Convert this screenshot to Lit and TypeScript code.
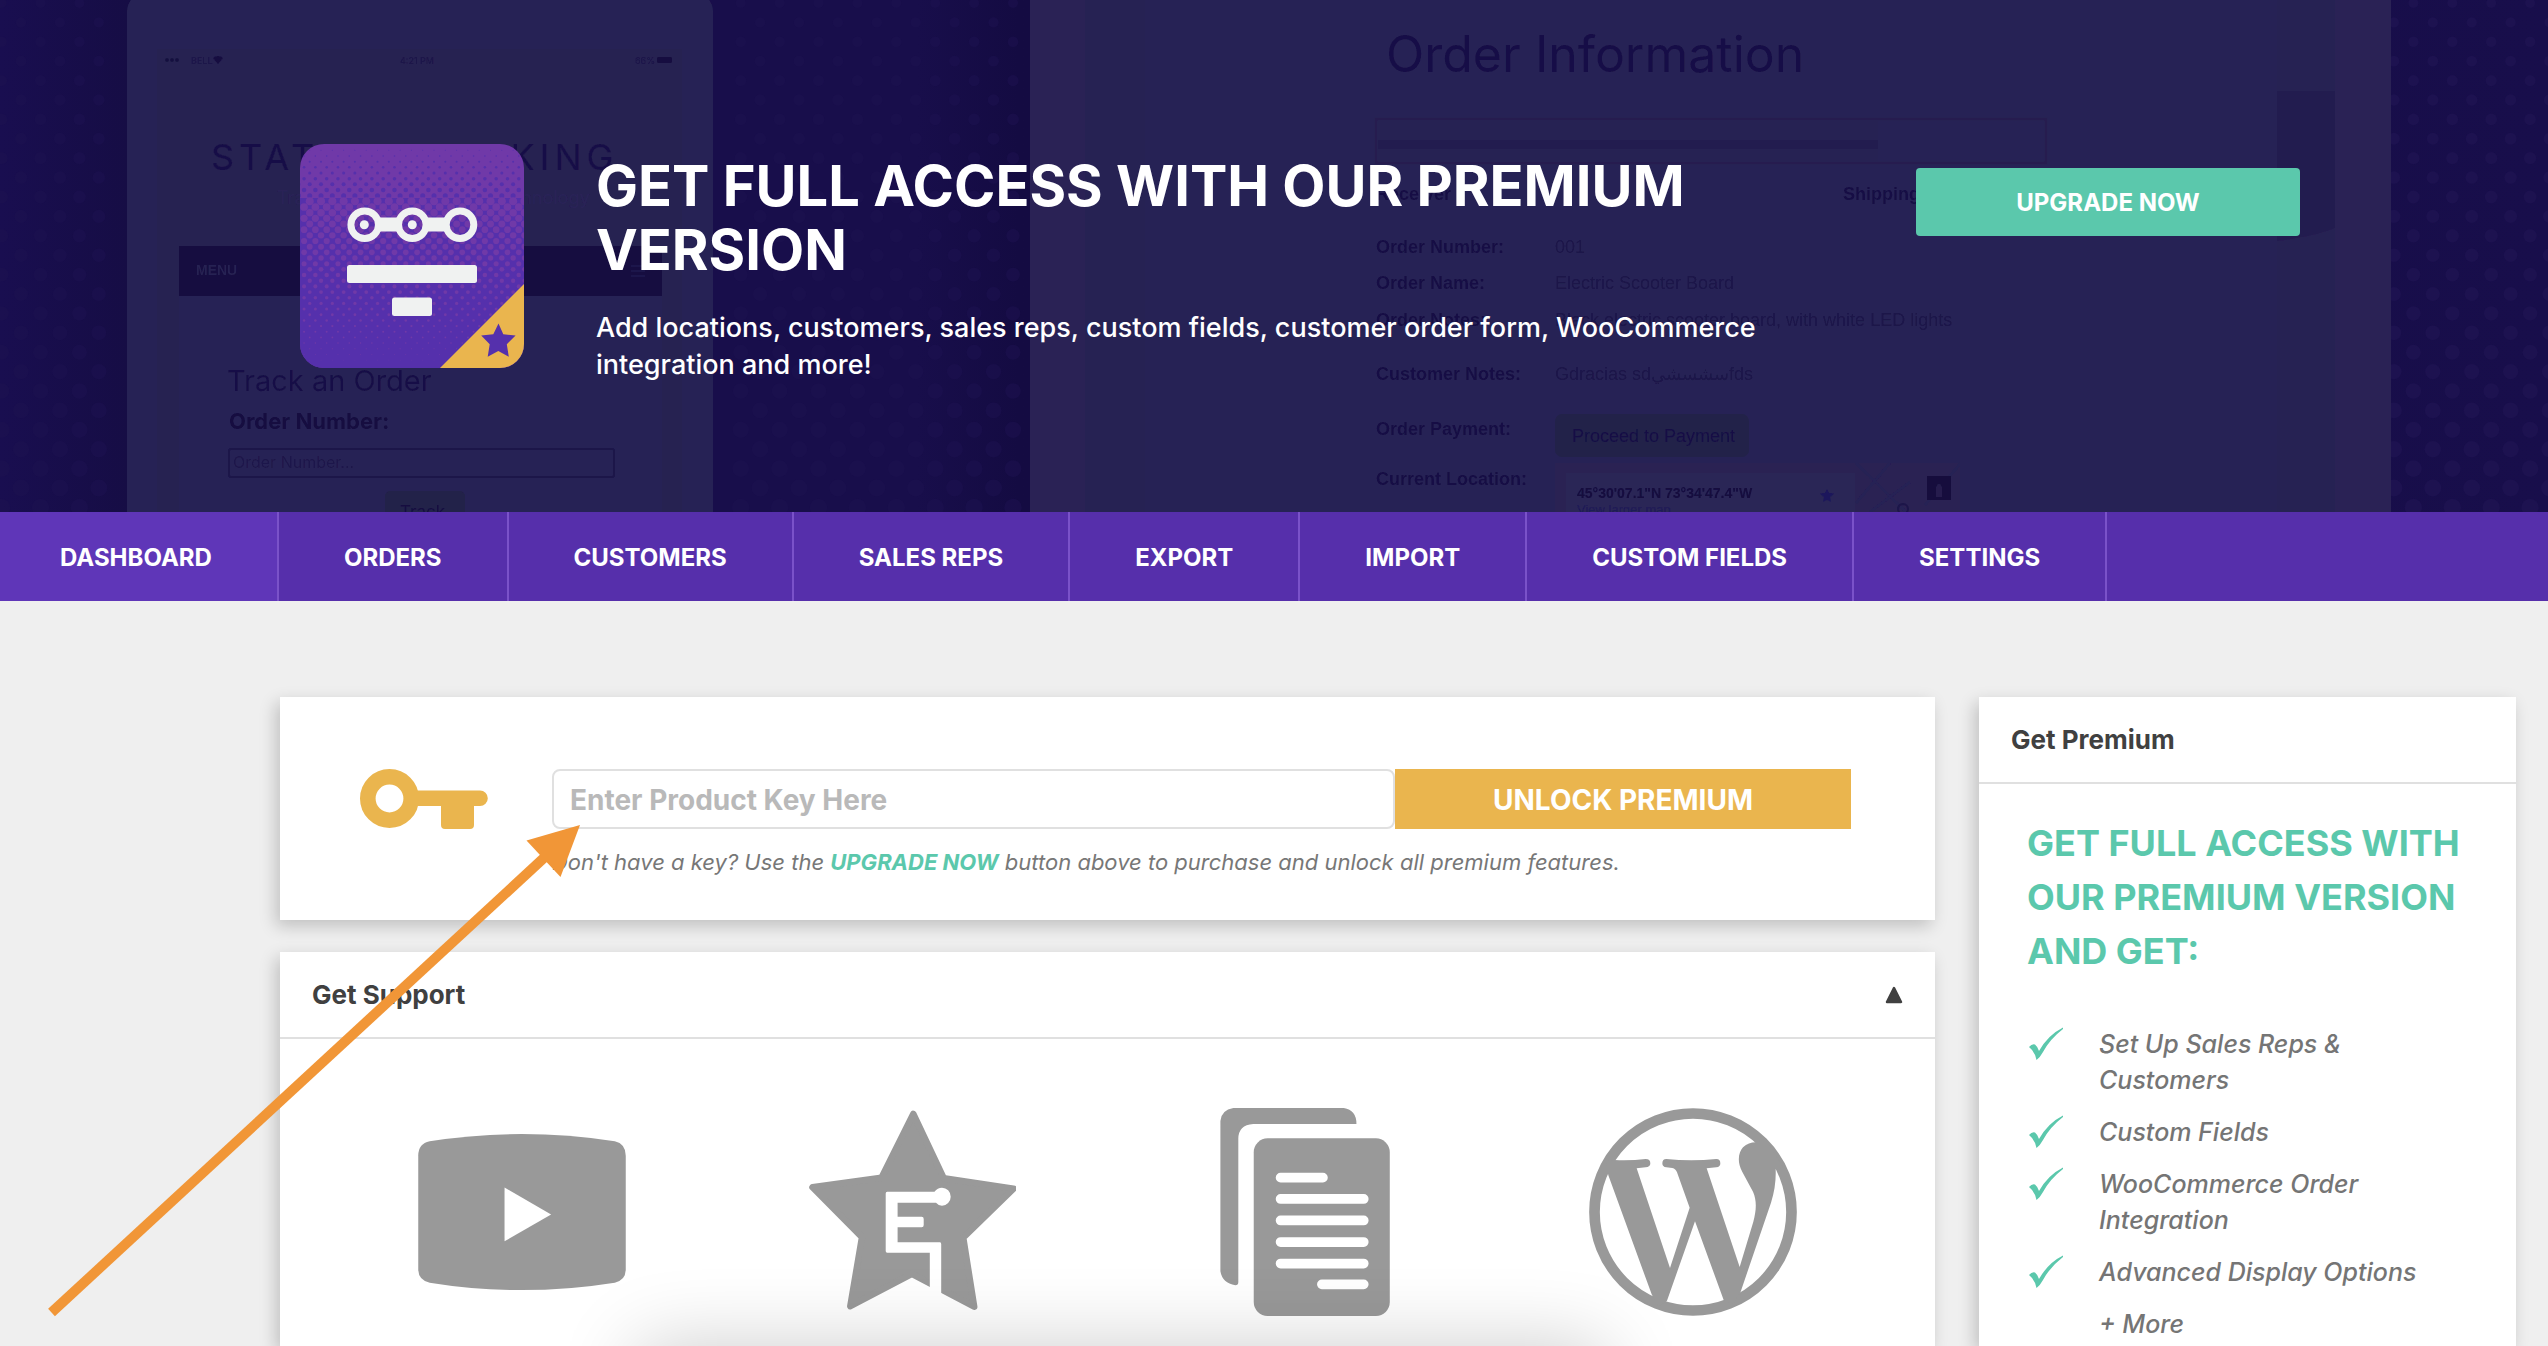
import { LitElement, html, svg, css } from "lit";
import { customElement, state } from "lit/decorators.js";

const NAV = [
  "Dashboard",
  "Orders",
  "Customers",
  "Sales Reps",
  "Export",
  "Import",
  "Custom Fields",
  "Settings",
];

const FEATURES = [
  "Set Up Sales Reps & Customers",
  "Custom Fields",
  "WooCommerce Order Integration",
  "Advanced Display Options",
];

const DETAILS = [
  { y: 253, label: "Order Number:", value: "001" },
  { y: 289, label: "Order Name:", value: "Electric Scooter Board" },
  { y: 326, label: "Order Notes:", value: "Black electric scooter board, with white LED lights" },
  { y: 380, label: "Customer Notes:", value: "Gdracias sdسشسشيfds" },
  { y: 435, label: "Order Payment:", value: "" },
  { y: 485, label: "Current Location:", value: "" },
];

/** Staggered dots of the hero background, growing towards the bottom. */
function heroDots() {
  const dots = [];
  for (let row = 0; row < 28; row++) {
    const y = 3 + row * 19.4;
    const r = 5 + row * 0.14;
    for (let col = 0; col < 67; col++) {
      const x = 1.6 + col * 38.9 + (row % 2 ? 19.4 : 0);
      if ((x > 118 && x < 722) || (x > 1022 && x < 2386)) continue;
      const strength = x < 1100 ? 0.55 : 1;
      dots.push(svg`<circle cx=${x} cy=${y} r=${r} opacity=${strength} />`);
    }
  }
  return dots;
}

/** Halftone of the product logo: dark dots above, light dots below. */
function halftone() {
  const dark = [];
  const light = [];
  for (let row = 0; row < 38; row++) {
    const y = 6.3 + row * 5.67;
    for (let col = 0; col < 20; col++) {
      const x = -1.6 + col * 11.3 + (row % 2 ? 5.67 : 0);
      if (row < 9) {
        dark.push(svg`<circle cx=${x} cy=${y} r=${0.5 + row * 0.25} />`);
      } else {
        light.push(svg`<circle cx=${x + 5.67} cy=${y} r=${Math.max(0.4, 4 - (row - 9) * 0.13)} />`);
      }
    }
  }
  return svg`
    <g fill="#5530ac">${dark}</g>
    <rect y="54" width="224" height="170" fill="#5530ac" />
    <g fill="#7039a8">${light}</g>`;
}

@customElement("hero-backdrop")
export class HeroBackdrop extends LitElement {
  static styles = css`
    :host {
      display: block;
    }
    .art {
      display: block;
      width: 100%;
      height: 100%;
    }
    .sans {
      font-family: "Liberation Sans", Arial, sans-serif;
    }
    .geo {
      font-family: Inter, sans-serif;
      font-weight: 400;
    }
    .bold {
      font-weight: 700;
    }
    .spaced {
      letter-spacing: 5px;
    }
  `;

  render() {
    return html`
      <svg class="art" viewBox="0 0 2548 512" preserveAspectRatio="xMinYMin slice" aria-hidden="true">
        <defs>
          <linearGradient id="base" x1="0" y1="0" x2="1" y2="0">
            <stop offset="0" stop-color="#190e50" />
            <stop offset="0.05" stop-color="#160d45" />
            <stop offset="0.28" stop-color="#180e4b" />
            <stop offset="0.36" stop-color="#180e4b" />
            <stop offset="0.4" stop-color="#140b42" />
            <stop offset="1" stop-color="#180e4b" />
          </linearGradient>
          <filter id="soft" x="-5%" y="-5%" width="110%" height="110%">
            <feGaussianBlur stdDeviation="0.7" />
          </filter>
        </defs>
        <rect width="2548" height="512" fill="url(#base)" />
        <g fill="#1d1250">${heroDots()}</g>
        <g filter="url(#soft)">
          <rect x="127" y="-8" width="586" height="600" rx="20" fill="#282455" />
          <rect x="157" y="49" width="525" height="480" fill="#262051" />
          <g fill="#171041">
            <circle cx="167" cy="60" r="2" />
            <circle cx="172" cy="60" r="2" />
            <circle cx="177" cy="60" r="2" />
            <path d="M213 58 Q218 54 223 58 L218 64 Z" />
            <rect x="657" y="57" width="15" height="6" rx="1" />
          </g>
          <g class="geo" font-size="9" fill="#1c1648">
            <text x="191" y="64">BELL</text>
            <text x="400" y="64">4:21 PM</text>
            <text x="635" y="64">66%</text>
          </g>
          <text class="geo spaced" x="211" y="170" font-size="36" fill="#191147">STATUS TRACKING</text>
          <text class="geo" x="277" y="204" font-size="18" fill="#2a2457">Tracking with the newest technology</text>
          <rect x="179" y="246" width="483" height="50" fill="#130c3f" />
          <rect x="179" y="296" width="483" height="220" fill="#282455" />
          <text class="sans bold" x="196" y="275" font-size="14" fill="#282252">MENU</text>
          <path d="M631 266h14M631 271h14M631 276h14" stroke="#1f194b" stroke-width="2" />
          <text class="geo" x="227" y="391" font-size="29" fill="#191147">Track an Order</text>
          <text class="geo bold" x="229" y="429" font-size="22" fill="#150d41">Order Number:</text>
          <rect x="229" y="449" width="385" height="28" rx="2" fill="none" stroke="#1b1449" stroke-width="2" />
          <text class="geo" x="233" y="468" font-size="16" fill="#1f184b">Order Number...</text>
          <rect x="385" y="491" width="80" height="40" rx="5" fill="#22204a" />
          <text class="geo" x="400" y="518" font-size="17" fill="#171041">Track</text>

          <rect x="1030" y="-10" width="1361" height="600" fill="#292354" />
          <rect x="1085" y="-10" width="60" height="600" fill="#282053" />
          <rect x="1145" y="-10" width="1132" height="600" fill="#282455" />
          <rect x="2277" y="-10" width="58" height="600" fill="#282153" />
          <path d="M2277 91h58v137q-20 8-58 13z" fill="#241d50" />
          <text class="geo" x="1386" y="72" font-size="50" fill="#180f47">Order Information</text>
          <rect x="1376" y="119" width="670" height="44" fill="none" stroke="#251d50" stroke-width="3" />
          <rect x="1378" y="121" width="500" height="40" fill="#272152" />
          <rect x="1378" y="140" width="500" height="9" fill="#241e50" />
          <g class="sans" font-size="18" fill="#170f44">
            <text class="bold" x="1376" y="200">Receiver</text>
            <text class="bold" x="1843" y="200">Shipping</text>
            ${DETAILS.map(
              (d) => svg`
                <text class="bold" x="1376" y=${d.y}>${d.label}</text>
                <text x="1555" y=${d.y} fill="#1b1449">${d.value}</text>`,
            )}
          </g>
          <rect x="1555" y="414" width="194" height="43" rx="7" fill="#22204a" />
          <text class="sans" x="1572" y="442" font-size="18" fill="#170f45">Proceed to Payment</text>
          <rect x="1555" y="463" width="405" height="60" fill="#2a2153" />
          <path d="M1856 463l50 49M1890 463l-34 40M1925 505l36-42M1870 512l40-30" stroke="#272054" stroke-width="3" />
          <rect x="1566" y="473" width="289" height="50" fill="#292556" />
          <text class="sans bold" x="1577" y="498" font-size="14" fill="#130b3e">45°30'07.1"N 73°34'47.4"W</text>
          <text class="sans" x="1577" y="514" font-size="13" fill="#1f1a58">View larger map</text>
          <path d="M1827 489l2 4 5 .5-4 3.500 1 5-4-2.500-4 2.500 1-5-4-3.500 5-.5z" fill="#1c165c" />
          <rect x="1927" y="476" width="24" height="24" fill="#130b3c" />
          <path d="M1936 497v-10q3-7 6 0v10" fill="#251d4e" />
          <circle cx="1903" cy="509" r="5" fill="none" stroke="#1d164a" stroke-width="2" />
        </g>
      </svg>
    `;
  }
}

@customElement("app-root")
export class AppRoot extends LitElement {
  @state() private open = true;

  static styles = css`
    :host {
      display: block;
      font-family: Inter, "Liberation Sans", sans-serif;
      color: #404040;
    }
    * {
      box-sizing: border-box;
    }
    h1,
    h2,
    h3,
    p,
    ul {
      margin: 0;
      padding: 0;
    }
    a {
      color: inherit;
      text-decoration: none;
    }
    .shell {
      position: relative;
      display: flex;
      flex-direction: column;
      min-height: 100vh;
      overflow: hidden;
      background: #efefef;
    }
    .hero {
      position: relative;
      min-height: 512px;
      background: #180e4b;
    }
    .backdrop {
      position: absolute;
      inset: 0;
    }
    .hero-row {
      position: relative;
      display: flex;
      align-items: flex-start;
      padding: 144px 248px 104px 300px;
    }
    .logo {
      flex: none;
      width: 224px;
      height: 224px;
    }
    .pitch {
      flex: 1;
      padding: 10px 120px 0 72px;
      color: #fff;
    }
    .pitch-title {
      font-size: 56px;
      line-height: 64px;
      font-weight: 700;
    }
    .pitch-text {
      padding-top: 27px;
      font-size: 27px;
      line-height: 37px;
      font-weight: 500;
    }
    .upgrade {
      flex: none;
      width: 384px;
      height: 68px;
      margin-top: 24px;
      border: 0;
      border-radius: 4px;
      background: #5bc8ac;
      color: #fff;
      font: 700 24px Inter, sans-serif;
    }
    .nav {
      display: flex;
      height: 89px;
      background: #562fab;
    }
    .nav-link {
      display: flex;
      align-items: center;
      padding: 2px 65px 0;
      border-right: 2px solid #7a52c9;
      color: #fff;
      font-size: 24px;
      font-weight: 700;
      text-transform: uppercase;
    }
    .nav-link:first-child {
      padding-left: 60px;
      background: #5f36b8;
    }
    .content {
      flex: 1;
      display: grid;
      grid-template-columns: minmax(0, 1fr) 537px;
      gap: 44px;
      padding: 96px 32px 0 280px;
    }
    .main {
      display: flex;
      flex-direction: column;
      gap: 32px;
    }
    .card {
      background: #fff;
      box-shadow: -4px 6px 16px rgba(0, 0, 0, 0.2);
    }
    .grow {
      flex: 1;
    }
    .card-head {
      display: flex;
      align-items: center;
      justify-content: space-between;
      height: 87px;
      padding: 0 32px;
      border-bottom: 2px solid #e0e0e0;
    }
    .card-title {
      font-size: 26px;
      line-height: 32px;
      font-weight: 700;
    }
    .toggle {
      display: flex;
      padding: 0;
      border: 0;
      background: none;
    }
    .key-row {
      display: flex;
      gap: 64px;
      padding: 72px 84px 40px 80px;
    }
    .key-icon {
      flex: none;
      width: 128px;
      height: 60px;
    }
    .key-form {
      flex: 1;
    }
    .key-fields {
      display: flex;
      height: 60px;
    }
    .key-input {
      flex: 1;
      min-width: 0;
      padding: 2px 16px 0;
      border: 2px solid #e0e0e0;
      border-radius: 8px;
      outline: 0;
      font: 700 28px Inter, sans-serif;
      color: #404040;
    }
    .key-input::placeholder {
      color: #b9b9b9;
      opacity: 1;
    }
    .unlock {
      width: 456px;
      padding: 2px 0 0;
      border: 0;
      background: #eab54e;
      color: #fff;
      font: 700 28px Inter, sans-serif;
    }
    .hint {
      padding-top: 16px;
      font-size: 22px;
      line-height: 35px;
      font-style: italic;
      color: #777;
    }
    .hint-link {
      font-weight: 700;
      color: #5bc8ac;
    }
    .visually-hidden {
      position: absolute;
      width: 1px;
      height: 1px;
      overflow: hidden;
      clip-path: inset(50%);
    }
    .support {
      display: grid;
      grid-template-columns: repeat(4, 1fr);
      justify-items: center;
      padding: 69px 47px 0;
    }
    .support-icon {
      display: block;
      width: 208px;
      height: 208px;
    }
    .perks {
      padding: 32px 48px 0;
    }
    .perks-title {
      font-size: 36px;
      line-height: 54px;
      font-weight: 700;
      color: #5bc8ac;
    }
    .perk-list {
      display: flex;
      flex-direction: column;
      gap: 16px;
      padding-top: 48px;
      list-style: none;
    }
    .perk {
      display: flex;
      align-items: flex-start;
      gap: 36px;
      font-size: 25px;
      line-height: 36px;
      font-weight: 500;
      font-style: italic;
      color: #757575;
    }
    .check {
      flex: none;
      width: 36px;
      height: 36px;
    }
    .dock-shade {
      position: absolute;
      left: 25%;
      right: 37%;
      bottom: -120px;
      height: 120px;
      box-shadow: 0 0 80px rgba(0, 0, 0, 0.2);
      pointer-events: none;
    }
    .arrow {
      position: absolute;
      left: 40px;
      top: 820px;
      width: 548px;
      height: 504px;
      pointer-events: none;
    }
  `;

  private logo() {
    return html`
      <svg class="logo" viewBox="0 0 224 224" role="img" aria-label="Status tracking">
        <defs>
          <clipPath id="tile"><rect width="224" height="224" rx="24" /></clipPath>
        </defs>
        <g clip-path="url(#tile)">
          <rect width="224" height="224" fill="#7039a8" />
          ${halftone()}
          <path d="M140 224L224 140V224Z" fill="#eab54e" />
          <path
            d="M198.500 179.500L203.300 190.300 215.600 191.600 206.800 200.200 208.800 212.700 198.300 207 187.700 212.700 189.700 200.200 181.200 191.600 193.300 190.300Z"
            fill="#5530ac"
          />
          <g fill="none" stroke="#f0f2f1" stroke-width="7">
            <circle cx="64.700" cy="80.700" r="13.800" />
            <circle cx="112.300" cy="80.700" r="13.800" />
            <circle cx="160" cy="80.700" r="13.800" />
          </g>
          <g fill="#f0f2f1">
            <circle cx="64.300" cy="80.700" r="4.500" />
            <circle cx="112.300" cy="80.700" r="4.500" />
            <path d="M77.500 73.500H99.500Q96.500 80.500 99.500 87.500H77.500Q80.500 80.500 77.500 73.500ZM125 73.500H147.300Q144.500 80.500 147.300 87.500H125Q128 80.500 125 73.500Z" />
            <rect x="47" y="121" width="130" height="18" rx="2.500" />
            <rect x="92" y="153.500" width="40" height="18.500" rx="2.500" />
          </g>
        </g>
      </svg>
    `;
  }

  private supportIcons() {
    return html`
      <a href="#videos" aria-label="Video tutorials">
        <svg class="support-icon" viewBox="418.500 1108 208.500 209" fill="#999">
          <path
            d="M430 1141.500Q522 1127 616 1141.500Q627 1144 627 1156V1270Q627 1281 616 1283.500Q522 1298.500 430 1283.500Q418.500 1281 418.500 1270V1156Q418.500 1144 430 1141.500Z"
          />
          <path d="M505.200 1188V1242L552 1215Z" fill="#fff" />
        </svg>
      </a>
      <a href="#website" aria-label="Our website">
        <svg class="support-icon" viewBox="28 28 208 208">
          <path
            d="M133.300 34L163.800 98.300 233.500 108.600 183.200 157.600 194.200 226.700 131.900 193.800 70.300 226.200 82 157.300 32.500 107.300 101.500 97.700Z"
            fill="#999"
            stroke="#999"
            stroke-width="6.500"
            stroke-linejoin="round"
          />
          <path
            d="M107.200 111.700H154.500Q157.500 107.700 162 107.700A8.700 9 0 0 1 162 125.700Q158.500 125.700 156 122.700H117.600V136.700H141.700Q143.700 136.700 143.700 139V145Q143.700 147.300 141.700 147.300H117.600V162.200H160Q161.200 162.200 161.200 164V214L149.800 208V172.800H107.200Q105.700 172.800 105.700 171V113.500Q105.700 111.700 107.200 111.700Z"
            fill="#fff"
          />
        </svg>
      </a>
      <a href="#docs" aria-label="Documentation">
        <svg class="support-icon" viewBox="419 28 208 209">
          <g fill="#999">
            <path d="M453 28H564Q576.700 30 576.700 44H473Q458 45 458 59V203Q458 206 455 206Q442 204 440 192V41Q441 30 453 28Z" />
            <rect x="473.500" y="58.500" width="136.700" height="178.500" rx="14" />
          </g>
          <path
            d="M500.500 98H543M500.500 119.400H584M500.500 141H584M500.500 162.700H584M500.500 184.300H584M542 205.200H584"
            stroke="#fff"
            stroke-width="9.800"
            stroke-linecap="round"
          />
        </svg>
      </a>
      <a href="#wordpress" aria-label="WordPress support">
        <svg class="support-icon" viewBox="88 84 624 624">
          <circle cx="400" cy="396" r="295.500" fill="none" stroke="#999" stroke-width="32" />
          <path
            d="M138 244L165 240Q215 242 258 237Q272 237 272 250Q272 261 258 262L231 265L331 564L390 383L352 277Q348 266 338 264L320 262Q308 261 308 250Q308 237 320 237Q395 245 470 237Q482 237 482 250Q482 261 470 262L441 265L540 561L581 425C590 392 592 362 580 335L548 276C530 243 538 215 550 202Q567 187 588 187L618 176L670 262L648 268Q650 318 634 368L543 635L520 672L492 660L406 424L322 662L295 680L276 643L146 286Z"
            fill="#999"
          />
        </svg>
      </a>
    `;
  }

  render() {
    return html`
      <div class="shell">
        <header class="hero">
          <hero-backdrop class="backdrop"></hero-backdrop>
          <div class="hero-row">
            ${this.logo()}
            <div class="pitch">
              <h1 class="pitch-title">GET FULL ACCESS WITH OUR PREMIUM VERSION</h1>
              <p class="pitch-text">
                Add locations, customers, sales reps, custom fields, customer order form, WooCommerce integration and
                more!
              </p>
            </div>
            <button class="upgrade" type="button">UPGRADE NOW</button>
          </div>
        </header>
        <nav class="nav" aria-label="Sections">
          ${NAV.map((item) => html`<a class="nav-link" href="#${item.toLowerCase().replace(" ", "-")}">${item}</a>`)}
        </nav>
        <div class="content">
          <main class="main">
            <section class="card key-row">
              <svg class="key-icon" viewBox="0 0 128 60" fill="#eab54e" aria-hidden="true">
                <circle cx="29.500" cy="29.500" r="21.700" fill="none" stroke="#eab54e" stroke-width="15.600" />
                <path d="M56 21.500H120A7.800 7.800 0 0 1 120 37.100H114V56Q114 60 110 60H85Q81 60 81 56V37.100H56Z" />
              </svg>
              <form class="key-form" @submit=${(e: Event) => e.preventDefault()}>
                <div class="key-fields">
                  <label class="visually-hidden" for="product-key">Product key</label>
                  <input class="key-input" id="product-key" type="text" placeholder="Enter Product Key Here" />
                  <button class="unlock" type="submit">UNLOCK PREMIUM</button>
                </div>
                <p class="hint">
                  Don't have a key? Use the <a class="hint-link" href="#upgrade">UPGRADE NOW</a> button above to
                  purchase and unlock all premium features.
                </p>
              </form>
            </section>
            <section class="card grow">
              <div class="card-head">
                <h2 class="card-title">Get Support</h2>
                <button
                  class="toggle"
                  type="button"
                  aria-label="Toggle support"
                  aria-expanded=${this.open}
                  @click=${() => (this.open = !this.open)}
                >
                  <svg width="18" height="18" viewBox="0 0 18 18">
                    <path
                      d="M9 2L16 16H2Z"
                      fill="#404040"
                      stroke="#404040"
                      stroke-width="2.500"
                      stroke-linejoin="round"
                    />
                  </svg>
                </button>
              </div>
              ${this.open ? html`<div class="support">${this.supportIcons()}</div>` : ""}
            </section>
          </main>
          <aside class="card">
            <div class="card-head"><h2 class="card-title">Get Premium</h2></div>
            <div class="perks">
              <h3 class="perks-title">GET FULL ACCESS WITH OUR PREMIUM VERSION AND GET:</h3>
              <ul class="perk-list">
                ${FEATURES.map(
                  (text) => html`
                    <li class="perk">
                      <svg class="check" viewBox="0 0 36 36" aria-hidden="true">
                        <path
                          d="M2 21Q5 17.500 8 18.500Q11 21 12 25Q21 9 36 1.500V3Q23 13 16 26Q13 31.500 9.500 34Q8 26 2 21Z"
                          fill="#5bc8ac"
                        />
                      </svg>
                      <span>${text}</span>
                    </li>
                  `,
                )}
                <li class="perk"><span class="check"></span><span>+ More</span></li>
              </ul>
            </div>
          </aside>
        </div>
        <div class="dock-shade"></div>
        <svg class="arrow" viewBox="40 820 548 504" aria-hidden="true">
          <path d="M51.500 1312.500L546 856" stroke="#f19637" stroke-width="10" />
          <path d="M580 825L526.500 840.500 560.500 877Z" fill="#f19637" />
        </svg>
      </div>
    `;
  }
}
